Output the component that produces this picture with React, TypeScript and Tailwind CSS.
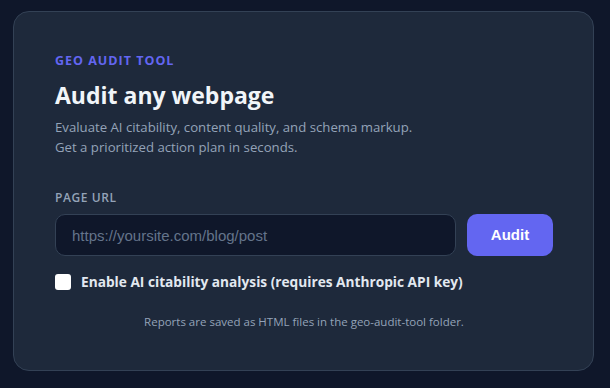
export default function App() {
  return (
    <main
      className="min-h-screen bg-[#0f172a] pl-[13px] pr-[16px] pt-[11px]"
      style={{ fontFamily: '"Open Sans", "Noto Sans", sans-serif' }}
    >
      <div className="h-[360px] rounded-[16px] border border-[#334155] bg-[#1e293b] pl-[41px] pr-[40px] pt-[41px]">
        <p className="text-[12.5px] font-bold leading-4 tracking-[0.08em] text-[#6366f1]">
          GEO AUDIT TOOL
        </p>
        <h1 className="mt-3 text-[23px] font-bold leading-7 text-[#f1f5f9]">
          Audit any webpage
        </h1>
        <p className="mt-2 text-[13.2px] leading-5 text-[#94a3b8]">
          Evaluate AI citability, content quality, and schema markup.
          <br />
          Get a prioritized action plan in seconds.
        </p>

        <label className="mt-[33px] block text-[12px] font-semibold leading-4 tracking-[0.05em] text-[#94a3b8]">
          PAGE URL
        </label>
        <div className="mt-2 flex gap-[11px]">
          <input
            type="text"
            placeholder="https://yoursite.com/blog/post"
            className="h-[42px] flex-1 rounded-[10px] border border-[#334155] bg-[#0f172a] px-4 text-[15px] text-[#e2e8f0] outline-none placeholder:text-[#64748b]"
            style={{ fontFamily: '"Liberation Sans", Arial, sans-serif' }}
          />
          <button
            className="h-[42px] w-[86px] rounded-[10px] bg-[#6366f1] text-[15px] font-bold text-white"
            style={{ fontFamily: '"Liberation Sans", Arial, sans-serif' }}
          >
            Audit
          </button>
        </div>

        <label className="mt-[18px] flex items-center gap-[10px]">
          <input type="checkbox" className="h-4 w-4 appearance-none rounded-[3px] bg-white" />
          <span className="text-[13.7px] font-bold leading-4 text-[#e2e8f0]">
            Enable AI citability analysis (requires Anthropic API key)
          </span>
        </label>

        <p className="mt-6 text-center text-[11.5px] leading-4 text-[#94a3b8]">
          Reports are saved as HTML files in the geo-audit-tool folder.
        </p>
      </div>
    </main>
  );
}
